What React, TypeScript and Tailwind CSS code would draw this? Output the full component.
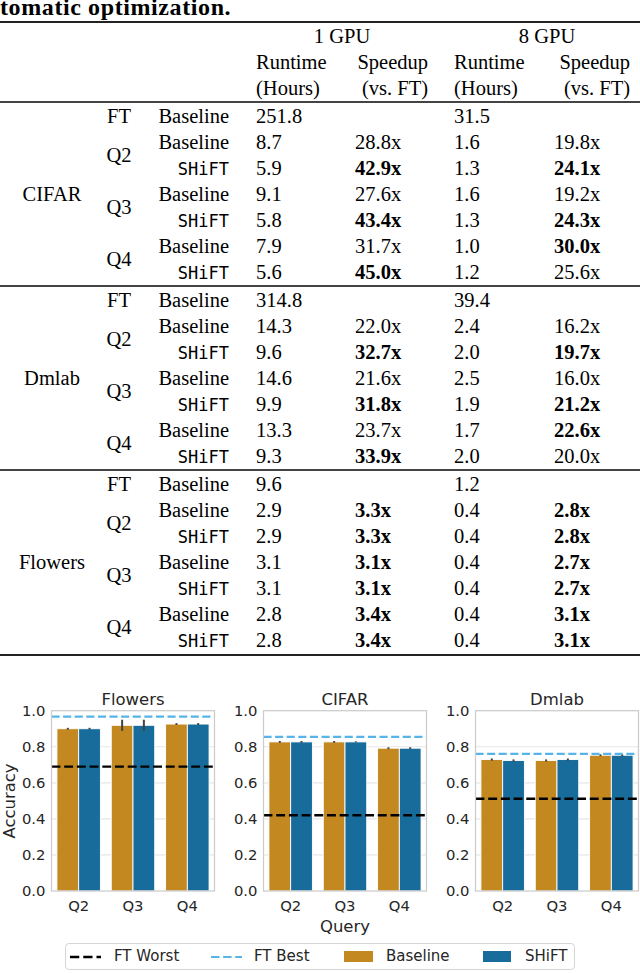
import React from "react";

type Row = [string, string, string, string, string];

type Group = {
  name: string;
  ft: Row;
  qs: { label: string; rows: [Row, Row] }[];
};

const groups: Group[] = [
  {
    name: "CIFAR",
    ft: ["Baseline", "251.8", "", "31.5", ""],
    qs: [
      { label: "Q2", rows: [["Baseline", "8.7", "28.8x", "1.6", "19.8x"], ["SHiFT", "5.9", "*42.9x", "1.3", "*24.1x"]] },
      { label: "Q3", rows: [["Baseline", "9.1", "27.6x", "1.6", "19.2x"], ["SHiFT", "5.8", "*43.4x", "1.3", "*24.3x"]] },
      { label: "Q4", rows: [["Baseline", "7.9", "31.7x", "1.0", "*30.0x"], ["SHiFT", "5.6", "*45.0x", "1.2", "25.6x"]] },
    ],
  },
  {
    name: "Dmlab",
    ft: ["Baseline", "314.8", "", "39.4", ""],
    qs: [
      { label: "Q2", rows: [["Baseline", "14.3", "22.0x", "2.4", "16.2x"], ["SHiFT", "9.6", "*32.7x", "2.0", "*19.7x"]] },
      { label: "Q3", rows: [["Baseline", "14.6", "21.6x", "2.5", "16.0x"], ["SHiFT", "9.9", "*31.8x", "1.9", "*21.2x"]] },
      { label: "Q4", rows: [["Baseline", "13.3", "23.7x", "1.7", "*22.6x"], ["SHiFT", "9.3", "*33.9x", "2.0", "20.0x"]] },
    ],
  },
  {
    name: "Flowers",
    ft: ["Baseline", "9.6", "", "1.2", ""],
    qs: [
      { label: "Q2", rows: [["Baseline", "2.9", "*3.3x", "0.4", "*2.8x"], ["SHiFT", "2.9", "*3.3x", "0.4", "*2.8x"]] },
      { label: "Q3", rows: [["Baseline", "3.1", "*3.1x", "0.4", "*2.7x"], ["SHiFT", "3.1", "*3.1x", "0.4", "*2.7x"]] },
      { label: "Q4", rows: [["Baseline", "2.8", "*3.4x", "0.4", "*3.1x"], ["SHiFT", "2.8", "*3.4x", "0.4", "*3.1x"]] },
    ],
  },
];

const Val = ({ v, className }: { v: string; className: string }) => {
  const bold = v.startsWith("*");
  return <div className={className + (bold ? " font-bold" : "")}>{bold ? v.slice(1) : v}</div>;
};

const DataRow = ({ r }: { r: Row }) => (
  <div className="flex h-[26px] items-center leading-[26px]">
    <div className="w-[95px] text-right">
      {r[0] === "SHiFT" ? (
        <span className="font-['DejaVu_Sans_Mono',monospace] text-[17px]">SHiFT</span>
      ) : (
        r[0]
      )}
    </div>
    <div className="w-[27px]" />
    <Val v={r[1]} className="w-[99px]" />
    <Val v={r[2]} className="w-[99px]" />
    <Val v={r[3]} className="w-[100px]" />
    <Val v={r[4]} className="w-[86px]" />
  </div>
);

const DatasetGroup = ({ g }: { g: Group }) => (
  <div className="flex">
    <div className="flex w-[104px] items-center justify-center">{g.name}</div>
    <div className="flex flex-col">
      <div className="flex">
        <div className="w-[30px] text-center leading-[26px]">FT</div>
        <DataRow r={g.ft} />
      </div>
      {g.qs.map((q) => (
        <div key={q.label} className="flex">
          <div className="flex w-[30px] items-center justify-center">{q.label}</div>
          <div className="flex flex-col">
            <DataRow r={q.rows[0]} />
            <DataRow r={q.rows[1]} />
          </div>
        </div>
      ))}
    </div>
  </div>
);

const ResultsTable = () => (
  <div className="font-['Liberation_Serif',serif] text-[20.5px] text-black">
    {/* caption continues from the previous page, top is cut off */}
    <div className="-mt-[5px] whitespace-nowrap text-[24px] font-bold leading-[24px] tracking-[0.6px]">
      tomatic optimization.
    </div>
    <div className="mt-[2px] h-[2px] bg-[#222]" />
    <div className="flex h-[26px] items-center leading-[26px]">
      <div className="w-[256px]" />
      <div className="w-[172px] text-center">1 GPU</div>
      <div className="w-[26px]" />
      <div className="w-[186px] text-center">8 GPU</div>
    </div>
    <div className="flex h-[26px] items-center leading-[26px]">
      <div className="w-[256px]" />
      <div className="w-[99px]">Runtime</div>
      <div className="w-[73px] text-right">Speedup</div>
      <div className="w-[26px]" />
      <div className="w-[100px]">Runtime</div>
      <div className="w-[76px] text-right">Speedup</div>
    </div>
    <div className="flex h-[26px] items-center leading-[26px]">
      <div className="w-[256px]" />
      <div className="w-[99px]">(Hours)</div>
      <div className="w-[73px] text-right">(vs. FT)</div>
      <div className="w-[26px]" />
      <div className="w-[100px]">(Hours)</div>
      <div className="w-[76px] text-right">(vs. FT)</div>
    </div>
    {groups.map((g) => (
      <React.Fragment key={g.name}>
        <div className="h-[2px] bg-[#444]" />
        <DatasetGroup g={g} />
      </React.Fragment>
    ))}
    <div className="mt-[1px] h-[2px] bg-[#222]" />
  </div>
);

const ORANGE = "#c38820";
const BLUE = "#176c9b";
const LIGHT = "#56b4e9";
const INK = "#262626";

type PanelProps = {
  title: string;
  data: [number, number][];
  errs: [number, number][];
  best: number;
  worst: number;
  yLabel?: boolean;
  xLabel?: boolean;
};

const Panel = ({ title, data, errs, best, worst, yLabel, xLabel }: PanelProps) => {
  const bx = 51.5;
  const bw = 163;
  const y0 = 202;
  const k = 180.3;
  const Y = (v: number) => y0 - v * k;
  const gw = bw / 3;
  const barW = gw * 0.4;
  return (
    <svg width={212} height={250} className="shrink-0 overflow-visible" fontFamily="'DejaVu Sans', sans-serif">
      <text x={bx + bw / 2} y={16} textAnchor="middle" fontSize={16.5} fill={INK}>
        {title}
      </text>
      {[0.2, 0.4, 0.6, 0.8].map((v) => (
        <line key={v} x1={bx} x2={bx + bw} y1={Y(v)} y2={Y(v)} stroke="#e6e6e6" strokeWidth={1.2} />
      ))}
      {[0, 0.2, 0.4, 0.6, 0.8, 1].map((v) => (
        <text key={v} x={bx - 6} y={Y(v) + 5.3} textAnchor="end" fontSize={14.8} fill={INK}>
          {v.toFixed(1)}
        </text>
      ))}
      {data.map((pair, i) =>
        pair.map((v, j) => {
          const x = bx + i * gw + gw * 0.1 + j * barW;
          const e = errs[i][j];
          return (
            <g key={`${i}-${j}`}>
              <rect x={x} y={Y(v)} width={barW} height={y0 - Y(v)} fill={j === 0 ? ORANGE : BLUE} stroke="#fff" strokeWidth={0.9} />
              <line x1={x + barW / 2} x2={x + barW / 2} y1={Y(v + e)} y2={Y(v - e)} stroke="#424242" strokeWidth={2} />
            </g>
          );
        })
      )}
      <line x1={bx} x2={bx + bw} y1={Y(best)} y2={Y(best)} stroke={LIGHT} strokeWidth={2.2} strokeDasharray="8.1 3.5" />
      <line x1={bx} x2={bx + bw} y1={Y(worst)} y2={Y(worst)} stroke="#000" strokeWidth={2.4} strokeDasharray="8.9 3.8" />
      <rect x={bx} y={Y(1)} width={bw} height={k} fill="none" stroke="#cccccc" strokeWidth={1.25} />
      {["Q2", "Q3", "Q4"].map((q, i) => (
        <text key={q} x={bx + (i + 0.5) * gw} y={222.4} textAnchor="middle" fontSize={14.8} fill={INK}>
          {q}
        </text>
      ))}
      {xLabel && (
        <text x={bx + bw / 2} y={243} textAnchor="middle" fontSize={16.5} fill={INK}>
          Query
        </text>
      )}
      {yLabel && (
        <text x={0} y={0} transform="translate(14.5 112) rotate(-90)" textAnchor="middle" fontSize={16.4} fill={INK}>
          Accuracy
        </text>
      )}
    </svg>
  );
};

const LegendLine = ({ color, width, dash }: { color: string; width: number; dash: string }) => (
  <svg width={31} height={10} className="shrink-0">
    <line x1={0} x2={31} y1={5} y2={5} stroke={color} strokeWidth={width} strokeDasharray={dash} />
  </svg>
);

const Legend = () => (
  <div className="ml-[65px] mt-[4px] flex h-[27px] w-[510px] items-center rounded-[4px] border border-[#d6d6d6] pl-[4px] font-['DejaVu_Sans',sans-serif] text-[15px] text-[#262626]">
    <div className="flex w-[141px] items-center">
      <LegendLine color="#000" width={2.5} dash="9.25 4" />
      <span className="ml-[13px]">FT Worst</span>
    </div>
    <div className="flex w-[133px] items-center">
      <LegendLine color={LIGHT} width={2.2} dash="8.5 3.6" />
      <span className="ml-[12px]">FT Best</span>
    </div>
    <div className="flex w-[139px] items-center">
      <div className="h-[11px] w-[29px] bg-[#c38820]" />
      <span className="ml-[13px]">Baseline</span>
    </div>
    <div className="flex items-center">
      <div className="h-[11px] w-[28px] bg-[#176c9b]" />
      <span className="ml-[14px]">SHiFT</span>
    </div>
  </div>
);

export default function App() {
  return (
    <div className="h-[973px] w-[640px] overflow-hidden bg-white">
      <ResultsTable />
      <div className="mt-[33px] flex">
        <Panel
          title="Flowers"
          data={[[0.9, 0.9], [0.919, 0.919], [0.926, 0.926]]}
          errs={[[0.005, 0.005], [0.031, 0.031], [0.005, 0.005]]}
          best={0.967}
          worst={0.69}
          yLabel
        />
        <Panel
          title="CIFAR"
          data={[[0.827, 0.827], [0.827, 0.827], [0.792, 0.792]]}
          errs={[[0.005, 0.005], [0.005, 0.003], [0.005, 0.005]]}
          best={0.855}
          worst={0.42}
          xLabel
        />
        <Panel
          title="Dmlab"
          data={[[0.729, 0.724], [0.724, 0.729], [0.753, 0.753]]}
          errs={[[0.006, 0.006], [0.006, 0.006], [0.005, 0.005]]}
          best={0.761}
          worst={0.512}
        />
      </div>
      <Legend />
    </div>
  );
}
